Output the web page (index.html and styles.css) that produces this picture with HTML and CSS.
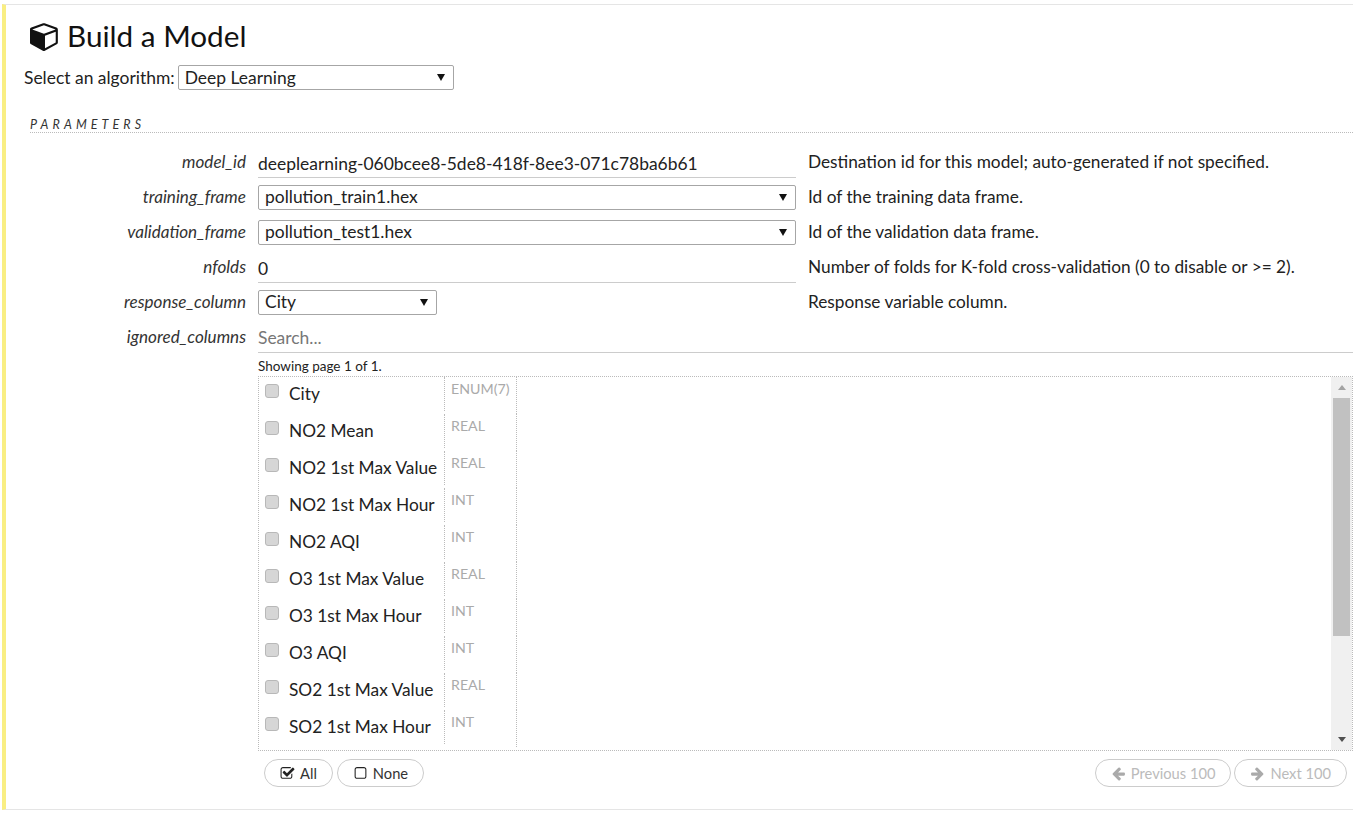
FILE: index.html
```html
<!DOCTYPE html>
<html lang="en">
<head>
    <meta charset="UTF-8" />
    <title>Build a Model</title>
    <link rel="stylesheet" href="styles.css">
</head>
<body>
<div class="cell">
    <h2 class="title">
        <svg class="cube" viewBox="0 0 1792 1792"><path d="M896 1629l640-349v-636l-640 233v752zm-64-865l698-254-698-254-698 254zm832-252v768q0 35-18 65t-51 46l-704 384q-28 16-61 16t-61-16l-704-384q-33-18-51-46t-18-65v-768q0-40 23-73t61-47l704-256q22-8 44-8t44 8l704 256q38 14 61 47t23 73z"/></svg>
        Build a Model
    </h2>
    <div class="algo">
        <span>Select an algorithm:</span>
        <div class="sel sel-algo">Deep Learning<i class="caret"></i></div>
    </div>

    <div class="section">Parameters</div>

    <div class="row">
        <label class="lbl">model_id</label>
        <div class="ctl"><div class="txt">deeplearning-060bcee8-5de8-418f-8ee3-071c78ba6b61</div></div>
        <div class="desc">Destination id for this model; auto-generated if not specified.</div>
    </div>
    <div class="row">
        <label class="lbl">training_frame</label>
        <div class="ctl"><div class="sel">pollution_train1.hex<i class="caret"></i></div></div>
        <div class="desc">Id of the training data frame.</div>
    </div>
    <div class="row">
        <label class="lbl">validation_frame</label>
        <div class="ctl"><div class="sel">pollution_test1.hex<i class="caret"></i></div></div>
        <div class="desc">Id of the validation data frame.</div>
    </div>
    <div class="row">
        <label class="lbl">nfolds</label>
        <div class="ctl"><div class="txt">0</div></div>
        <div class="desc">Number of folds for K-fold cross-validation (0 to disable or &gt;= 2).</div>
    </div>
    <div class="row">
        <label class="lbl">response_column</label>
        <div class="ctl"><div class="sel sel-small">City<i class="caret"></i></div></div>
        <div class="desc">Response variable column.</div>
    </div>

    <div class="row row-ignored">
        <label class="lbl">ignored_columns</label>
        <div class="picker">
            <div class="txt search">Search...</div>
            <div class="paging">Showing page 1 of 1.</div>
            <div class="listbox">
                <div class="list">
                    <div class="item"><span class="name"><input type="checkbox">City</span><span class="type">ENUM(7)</span></div>
                    <div class="item"><span class="name"><input type="checkbox">NO2 Mean</span><span class="type">REAL</span></div>
                    <div class="item"><span class="name"><input type="checkbox">NO2 1st Max Value</span><span class="type">REAL</span></div>
                    <div class="item"><span class="name"><input type="checkbox">NO2 1st Max Hour</span><span class="type">INT</span></div>
                    <div class="item"><span class="name"><input type="checkbox">NO2 AQI</span><span class="type">INT</span></div>
                    <div class="item"><span class="name"><input type="checkbox">O3 1st Max Value</span><span class="type">REAL</span></div>
                    <div class="item"><span class="name"><input type="checkbox">O3 1st Max Hour</span><span class="type">INT</span></div>
                    <div class="item"><span class="name"><input type="checkbox">O3 AQI</span><span class="type">INT</span></div>
                    <div class="item"><span class="name"><input type="checkbox">SO2 1st Max Value</span><span class="type">REAL</span></div>
                    <div class="item"><span class="name"><input type="checkbox">SO2 1st Max Hour</span><span class="type">INT</span></div>
                </div>
                <div class="scrollbar">
                    <i class="arrow-up"></i>
                    <div class="thumb"></div>
                    <i class="arrow-down"></i>
                </div>
            </div>
            <div class="actions">
                <button class="btn">
                    <svg class="ico" viewBox="0 0 1792 1792"><path d="M1472 930v318q0 119-84.5 203.5t-203.5 84.5h-832q-119 0-203.5-84.5t-84.5-203.5v-832q0-119 84.5-203.5t203.5-84.5h832q63 0 117 25 15 7 18 23 3 17-9 29l-49 49q-10 10-23 10-3 0-9-2-23-6-45-6h-832q-66 0-113 47t-47 113v832q0 66 47 113t113 47h832q66 0 113-47t47-113v-254q0-13 9-22l64-64q10-10 23-10 6 0 12 3 20 8 20 29zm231-489l-814 814q-24 24-57 24t-57-24l-430-430q-24-24-24-57t24-57l110-110q24-24 57-24t57 24l263 263 647-647q24-24 57-24t57 24l110 110q24 24 24 57t-24 57z"/></svg>
                    All
                </button>
                <button class="btn">
                    <svg class="ico" viewBox="0 0 1792 1792"><path d="M1312 256h-832q-66 0-113 47t-47 113v832q0 66 47 113t113 47h832q66 0 113-47t47-113v-832q0-66-47-113t-113-47zm288 160v832q0 119-84.5 203.5t-203.5 84.5h-832q-119 0-203.5-84.5t-84.5-203.5v-832q0-119 84.5-203.5t203.5-84.5h832q119 0 203.5 84.5t84.5 203.5z"/></svg>
                    None
                </button>
                <div class="pager">
                    <button class="btn off">
                        <svg class="ico" viewBox="0 0 1792 1792"><path d="M1664 896v128q0 53-32.5 90.5t-84.5 37.5h-704l293 294q38 36 38 90t-38 90l-75 76q-37 37-90 37-52 0-91-37l-651-652q-37-37-37-90 0-52 37-91l651-650q38-38 91-38 52 0 90 38l75 74q38 38 38 91t-38 91l-293 293h704q52 0 84.5 37.5t32.5 90.5z"/></svg>
                        Previous 100
                    </button>
                    <button class="btn off">
                        <svg class="ico" viewBox="0 0 1792 1792"><path d="M1600 960q0 54-37 91l-651 651q-39 37-91 37-51 0-90-37l-75-75q-38-38-38-91t38-91l293-293h-704q-52 0-84.5-37.5t-32.5-90.5v-128q0-53 32.5-90.5t84.5-37.5h704l-293-294q-38-36-38-90t38-90l75-75q38-38 90-38 53 0 91 38l651 651q37 35 37 90z"/></svg>
                        Next 100
                    </button>
                </div>
            </div>
        </div>
    </div>
</div>
</body>
</html>
```

FILE: styles.css
```css
body {
    margin: 0;
    font-family: Lato, sans-serif;
    font-size: 17.45px;
    color: #222;
    background: #fff;
}

.cell {
    margin: 4px 0 0 2px;
    height: 806px;
    box-sizing: border-box;
    border-top: 1px solid #e5e5e5;
    border-bottom: 1px solid #e5e5e5;
    border-left: 4px solid #f9ee82;
    overflow: hidden;
}

.title {
    display: flex;
    align-items: center;
    gap: 7px;
    margin: 0;
    padding: 13px 0 0 24px;
    height: 36px;
    font-size: 29.7px;
    font-weight: 400;
    line-height: 36px;
    color: #111;
}
.cube {
    width: 30px;
    height: 30px;
    fill: #111;
}

.algo {
    display: flex;
    align-items: center;
    gap: 3px;
    margin: 11px 0 0 18px;
    height: 25px;
}

.sel {
    position: relative;
    box-sizing: border-box;
    height: 25px;
    padding-left: 6px;
    line-height: 21px;
    border: 1px solid #a6a6a6;
    border-radius: 2px;
    color: #222;
    background: #fff;
}
.sel-algo {
    width: 276px;
    line-height: 23px;
}
.sel-small { width: 179px; }
.caret {
    position: absolute;
    right: 8px;
    top: 8px;
    border-left: 4px solid transparent;
    border-right: 4px solid transparent;
    border-top: 7px solid #111;
}

.section {
    margin: 26px 0 0 24px;
    padding-bottom: 1px;
    height: 15px;
    line-height: 17px;
    font-size: 12.5px;
    font-style: italic;
    letter-spacing: 4.1px;
    text-transform: uppercase;
    color: #333;
    border-bottom: 1px dotted #bbb;
}

.row {
    display: flex;
    height: 35px;
    align-items: center;
}
.section + .row { margin-top: 12px; }

.lbl {
    box-sizing: border-box;
    flex: none;
    width: 240px;
    margin-bottom: 2px;
    text-align: right;
    font-style: italic;
    font-size: 17.1px;
    color: #333;
}
.ctl {
    flex: none;
    width: 538px;
    margin-left: 12px;
}
.desc {
    margin: 0 0 2px 12px;
    font-size: 17.25px;
    white-space: nowrap;
}

.txt {
    height: 27px;
    line-height: 28px;
    margin-top: 2px;
    border-bottom: 1px solid #ccc;
}

.row-ignored {
    height: auto;
    align-items: flex-start;
}
.row-ignored .lbl { padding-top: 6px; }
.picker {
    flex: 1;
    margin-left: 12px;
    min-width: 0;
}
.search {
    height: 32px;
    margin-top: 0;
    line-height: 35px;
    color: #777;
}
.paging {
    height: 23px;
    line-height: 26px;
    font-size: 13.5px;
}

.listbox {
    display: flex;
    box-sizing: border-box;
    height: 375px;
    border: 1px dotted #bbb;
    overflow: hidden;
}
.list {
    flex: 1;
    min-width: 0;
}
.item {
    display: flex;
    height: 37px;
}
.name {
    box-sizing: border-box;
    display: flex;
    align-items: center;
    width: 186px;
    height: 34px;
    padding: 0 0 1px 6px;
    font-size: 17.3px;
    color: #222;
    white-space: nowrap;
    border-right: 1px dotted #bbb;
}
.name input {
    appearance: none;
    box-sizing: border-box;
    width: 14px;
    height: 14px;
    margin: -5px 10px 0 0;
    background: #d6d6d6;
    border: 1px solid #b8b8b8;
    border-radius: 3px;
}
.type {
    box-sizing: border-box;
    width: 72px;
    height: 37px;
    padding: 3px 0 0 6px;
    font-size: 14.2px;
    color: #aaa;
    border-right: 1px dotted #bbb;
}

.scrollbar {
    flex: none;
    display: flex;
    flex-direction: column;
    align-items: center;
    box-sizing: border-box;
    width: 21px;
    background: #f0f0f0;
}
.arrow-up {
    margin: 8px 0 8px;
    border-left: 4px solid transparent;
    border-right: 4px solid transparent;
    border-bottom: 5px solid #a3a3a3;
}
.thumb {
    width: 17px;
    height: 238px;
    background: #c1c1c1;
}
.arrow-down {
    margin-top: auto;
    margin-bottom: 8px;
    border-left: 4px solid transparent;
    border-right: 4px solid transparent;
    border-top: 5px solid #505050;
}

.actions {
    display: flex;
    gap: 4px;
    margin: 8px 6px 0 6px;
}
.pager {
    display: flex;
    gap: 3px;
    margin-left: auto;
}
.btn {
    display: flex;
    align-items: center;
    gap: 5px;
    box-sizing: border-box;
    height: 28px;
    padding: 0 15px;
    font-family: Lato, sans-serif;
    font-size: 14.7px;
    color: #333;
    background: #fff;
    border: 1px solid #ccc;
    border-radius: 14px;
}
.ico {
    width: 15px;
    height: 15px;
    fill: #222;
}
.off {
    color: #bbb;
}
.off .ico {
    fill: #aaa;
}
```
